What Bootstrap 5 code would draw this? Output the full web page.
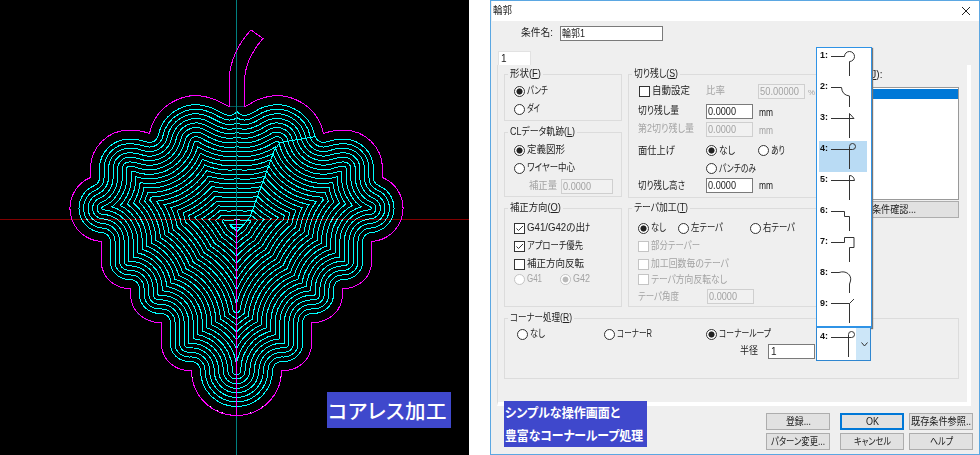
<!DOCTYPE html>
<html lang="ja">
<head>
<meta charset="utf-8">
<meta name="viewport" content="width=device-width, initial-scale=1">
<title>輪郭</title>
<link href="https://cdn.jsdelivr.net/npm/bootstrap@5.3.0/dist/css/bootstrap.min.css" rel="stylesheet">
<style>
body{width:980px;height:455px;overflow:hidden;background:#fff;color:#222;font:10px/14px "Liberation Sans","Noto Sans CJK JP",sans-serif;font-feature-settings:"palt"}
.cad{width:469px;height:455px;background:#000;margin-right:21px}
.cad svg{display:block}
.axis{mix-blend-mode:lighten}
.caption-tag{position:absolute;background:#3f48cc;color:#fff;font-family:"Noto Sans CJK JP",sans-serif;white-space:nowrap}
.tag-a{left:327px;top:392px;width:124px;height:36px;font-size:20.5px;font-weight:500;line-height:37px;padding-left:1px}
.tag-b{left:13px;top:400px;width:143px;height:46px;font-size:13px;font-weight:700;line-height:22.5px;padding-left:1px}
.dlg{width:490px;height:455px;background:#efefef;border:1px solid #5ba7e2;font-size:10px;padding-left:1px}
.titlebar{height:20px;padding:0 8px 0 1px}
.namebar{height:30px;padding:5px 0 0 29px}
.t{display:inline-block;white-space:nowrap;line-height:14px;flex:none}
.caption-tag .t{line-height:inherit}
.fld{flex:none;background:#fff;border:1px solid #7a7a7a;height:15px;line-height:13px;padding-left:1px;white-space:nowrap}
.off{color:#a3a3a3}
.fld.off{background:#f1f1f1;border-color:#cfcfcf}
.tabhead{width:33px;height:14px;margin-left:6px;background:#fff;border:1px solid #e2e2e2;border-bottom:0;line-height:14px;padding-left:2px}
.pane{margin-left:5px;width:474px;height:341px;border-left:1px solid #dcdcdc;border-right:4px solid #fff;border-bottom:4px solid #fff;padding:9px 0 0 6px}
.grp{display:grid;border:1px solid #dcdcdc}
.grp>.lg{margin-top:-8px;height:14px;justify-self:start;background:#efefef;padding:0 2px;margin-left:3px}
.rw{display:flex;align-items:center;min-height:0}
.g1{height:47px;grid-template-rows:7px 18px 18px}
.g2{height:65px;grid-template-rows:8px 18px 18px 18px}
.g3{height:99px;grid-template-rows:10px 18px 18px 18px 12px}
.g4{height:124px;grid-template-rows:7px 18px 22px 14px 29px 7px 27px}
.g5{height:99px;grid-template-rows:10px 18px 18px 18px 13px 21px}
.g6{height:61px;width:455px;grid-template-rows:6px 18px 16px}
.col-a{width:118px}.col-b{width:236px;margin-left:6px}.col-c{width:91px;margin-left:4px}
.rd,.ck{flex:none;width:11px;height:11px;border:1px solid #333;background:#fff;margin-right:2px}
.rd{border-radius:50%}
.rd.on{background:radial-gradient(circle,#222 0 2.7px,#fff 3.4px)}
.rd.off,.ck.off{border-color:#c4c4c4}
.rd.on.off{background:radial-gradient(circle,#b9b9b9 0 2.6px,#fff 3.3px)}
.ck svg{display:block}
.in9{padding-left:9px}
.in10{padding-left:10px}
.lst{height:113px;background:#fff;border:1px solid #999;border-left:0;padding-top:1px}
.sel{height:10px;background:#0078d7}
.wbtn{display:flex;align-items:center;justify-content:center;background:#e1e1e1;border:1px solid #adadad;height:17px;white-space:nowrap}
.btns{display:grid;grid-template-columns:68px 63px 63px;gap:3px 6px;margin:7px 0 0 274px;width:max-content}
.btns .wbtn{width:64px}
.wbtn.ok{border:2px solid #0078d7}
.drop{position:absolute;left:816px;top:47px;width:56px;height:281px;background:#fff;border:1px solid #2f93e6;border-bottom-width:2px;box-shadow:1px 1px 1px #777}
.combo{position:absolute;left:816px;top:328px;width:55px;height:33px;background:#fff;border:1px solid #2f86d0;border-top:0}
.drop svg,.combo svg{display:block}
</style>
</head>
<body class="position-relative d-flex">

<section class="cad flex-shrink-0">
<svg width="469" height="455" viewBox="0 0 469 455" fill="none" shape-rendering="crispEdges">
  <defs>
    <path id="leaf" d="M229.5,106.5 C224,105 220,101 212,98.500 A47.600 47.600 0 0 0 149.500,133.500 C144,131.500 137,130 129,130.200 A38.500 38.500 0 0 0 90.500,168 L90.500,177.500 A33.300 33.300 0 0 0 101.500,241.500 L101.500,262 A28 26.500 0 0 0 130.500,288.500 L130.500,295 C131,310 143,323 161.500,322.500 L161.500,344 A28 26.500 0 0 0 191.500,370.500 A44.800 44.800 0 1 0 281.500,370.500 A28 26.500 0 0 0 311.500,344 L311.500,322.500 C330,323 342,310 342.500,295 L342.500,288.500 A28 26.500 0 0 0 371.500,262 L371.500,241.500 A33.300 33.300 0 0 0 382.500,177.500 L382.500,168 A38.500 38.500 0 0 0 344,130.200 C336,130 329,131.500 323.500,133.500 A47.600 47.600 0 0 0 261,98.500 C253,101 250,105 244.500,106.500"/>
    <clipPath id="inside"><use href="#leaf"/></clipPath>
  </defs>
  <g id="offsets" clip-path="url(#inside)" stroke-linejoin="round" stroke-linecap="round"></g>
  <path class="axis" d="M0,219.500H469" stroke="#800000"/>
  <path d="M236.500,0V455" stroke="#008080"/>
  <path d="M316,136.500L280,142.500L274,151L250,217L244,224.500L237,231.500L230,224.500H245M233,227.500H241" stroke="#0ff"/>
  <use href="#leaf" stroke="#f0f"/>
  <path d="M229.500,106.500V93.500L229,93V80C230,61 238,44 251,30L263,38.500C252,51 244.500,66 244.500,81V106.500M236.500,219V415" stroke="#f0f"/>
  <path d="M192,377.500h1M280,377.500h1M210,406.500h1M262,406.500h1M217,410.500h1M222,412.500h1M250,412.500h1" stroke="#fff"/>
</svg>
</section>
<div class="caption-tag tag-a"><span class="t" data-w="119">コアレス加工</span></div>

<main class="dlg flex-shrink-0 position-relative">
  <header class="titlebar bg-white d-flex align-items-center justify-content-between">
    <span class="t" data-w="19">輪郭</span>
    <svg width="10" height="10" viewBox="0 0 10 10" stroke="#222" fill="none"><path d="M1,1L9,9M9,1L1,9"/></svg>
  </header>
  <div class="namebar d-flex">
    <span class="t" data-w="32" style="margin-right:7px">条件名:</span><div class="fld" style="width:103px"><span class="t" data-w="23">輪郭1</span></div>
  </div>
  <div class="tabhead">1</div>
  <div class="pane">
    <div class="d-flex">
      <div class="col-a d-grid" style="row-gap:11px">
        <div class="grp g1">
          <div class="lg"><span class="t" data-w="31">形状(<u>F</u>)</span></div>
          <div class="rw in9"><i class="rd on"></i><span class="t" data-w="21">パンチ</span></div>
          <div class="rw in9"><i class="rd"></i><span class="t" data-w="13">ダイ</span></div>
        </div>
        <div class="grp g2">
          <div class="lg"><span class="t" data-w="65">CLデータ軌跡(<u>L</u>)</span></div>
          <div class="rw in9"><i class="rd on"></i><span class="t" data-w="38">定義図形</span></div>
          <div class="rw in9"><i class="rd"></i><span class="t" data-w="48">ワイヤー中心</span></div>
          <div class="rw off justify-content-end pe-2"><span class="t me-1" data-w="28">補正量</span><div class="fld off" style="width:52px"><span class="t" data-w="28">0.0000</span></div></div>
        </div>
        <div class="grp g3">
          <div class="lg"><span class="t" data-w="51">補正方向(<u>O</u>)</span></div>
          <div class="rw in9"><i class="ck"><svg width="9" height="9" fill="none" stroke="#333"><path d="M1.500,4.500L3.500,6.500L8,2"/></svg></i><span class="t" data-w="63">G41/G42の出ﾅ</span></div>
          <div class="rw in9"><i class="ck"><svg width="9" height="9" fill="none" stroke="#333"><path d="M1.500,4.500L3.500,6.500L8,2"/></svg></i><span class="t" data-w="56">アプローチ優先</span></div>
          <div class="rw in9"><i class="ck"></i><span class="t" data-w="57">補正方向反転</span></div>
          <div class="rw in9 off"><i class="rd off"></i><span class="t" data-w="15">G41</span><i class="rd on off" style="margin-left:18px"></i><span class="t" data-w="17">G42</span></div>
        </div>
      </div>
      <div class="col-b d-grid" style="row-gap:10px">
        <div class="grp g4">
          <div class="lg"><span class="t" data-w="44">切り残し(<u>S</u>)</span></div>
          <div class="rw in10"><i class="ck"></i><span class="t" data-w="38">自動設定</span><span class="t off" data-w="19" style="margin-left:16px">比率</span><div class="fld off" style="width:47px;margin-left:33px"><span class="t" data-w="39">50.00000</span></div><span class="t off" style="margin-left:3px;font-size:8px;padding-top:4px">%</span></div>
          <div class="rw in9"><span class="t" data-w="41">切り残し量</span><div class="fld" style="width:47px;margin-left:27px"><span class="t" data-w="28">0.0000</span></div><span class="t pt-1" data-w="14" style="margin-left:6px">mm</span></div>
          <div class="rw in9 off"><span class="t" data-w="56">第2切り残し量</span><div class="fld off" style="width:47px;margin-left:12px"><span class="t" data-w="28">0.0000</span></div><span class="t pt-1" data-w="14" style="margin-left:6px">mm</span></div>
          <div class="rw in9"><span class="t" data-w="37">面仕上げ</span><i class="rd on" style="margin-left:31px"></i><span class="t" data-w="16">なし</span><i class="rd" style="margin-left:23px"></i><span class="t" data-w="14">あり</span></div>
          <div class="rw" style="padding-left:77px"><i class="rd"></i><span class="t" data-w="37">パンチのみ</span></div>
          <div class="rw in9"><span class="t" data-w="47">切り残し高さ</span><div class="fld" style="width:47px;margin-left:21px"><span class="t" data-w="28">0.0000</span></div><span class="t" data-w="14" style="margin-left:6px">mm</span></div>
        </div>
        <div class="grp g5">
          <div class="lg"><span class="t" data-w="54">テーパ加工(<u>T</u>)</span></div>
          <div class="rw in9"><i class="rd on"></i><span class="t" data-w="15">なし</span><i class="rd" style="margin-left:12px"></i><span class="t" data-w="32">左テーパ</span><i class="rd" style="margin-left:27px"></i><span class="t" data-w="32">右テーパ</span></div>
          <div class="rw in9 off"><i class="ck off"></i><span class="t" data-w="49">部分テーパー</span></div>
          <div class="rw in9 off"><i class="ck off"></i><span class="t" data-w="78">加工回数毎のテーパ</span></div>
          <div class="rw in9 off"><i class="ck off"></i><span class="t" data-w="76">テーパ方向反転なし</span></div>
          <div class="rw in9 off"><span class="t" data-w="41">テーパ角度</span><div class="fld off" style="width:47px;margin-left:28px"><span class="t" data-w="28">0.0000</span></div></div>
        </div>
      </div>
      <div class="col-c">
        <div style="height:13px;margin-top:-6px;padding-left:0"><span class="t">(<u>J</u>):</span></div>
        <div class="lst" style="margin-top:6px"><div class="sel"></div></div>
        <div class="wbtn justify-content-start" style="margin-top:1px;padding-left:3px"><span class="t" data-w="44">条件確認...</span></div>
      </div>
    </div>
    <div class="grp g6" style="margin-top:11px">
      <div class="lg"><span class="t" data-w="62">コーナー処理(<u>R</u>)</span></div>
      <div class="rw" style="padding-left:12px"><i class="rd"></i><span class="t" data-w="15">なし</span><i class="rd" style="margin-left:59px"></i><span class="t" data-w="35">コーナーR</span><i class="rd on" style="margin-left:54px"></i><span class="t" data-w="52">コーナーループ</span></div>
      <div class="rw" style="padding-left:235px"><span class="t" data-w="18">半径</span><div class="fld" style="width:47px;margin-left:10px;padding-left:2px">1</div></div>
    </div>
  </div>
  <div class="btns">
    <div class="wbtn"><span class="t" data-w="25">登録...</span></div>
    <div class="wbtn ok"><span class="t" data-w="13">OK</span></div>
    <div class="wbtn"><span class="t" data-w="60">既存条件参照..</span></div>
    <div class="wbtn"><span class="t" data-w="54">パターン変更...</span></div>
    <div class="wbtn"><span class="t" data-w="37">キャンセル</span></div>
    <div class="wbtn"><span class="t" data-w="23">ヘルプ</span></div>
  </div>
  <div class="caption-tag tag-b"><span class="t" data-w="115">シンプルな操作画面と</span><br><span class="t" data-w="138">豊富なコーナーループ処理</span></div>
</main>

<div class="drop">
<svg width="54" height="278" viewBox="817 48 54 278" fill="none" stroke="#333">
  <rect x="819" y="141" width="48" height="31" fill="#b9dbf4" stroke="none"/>
  <g fill="#111" stroke="none" font-family="Liberation Sans" font-size="9" font-weight="700">
    <text x="820" y="58">1:</text><text x="820" y="89">2:</text><text x="820" y="120">3:</text><text x="820" y="151">4:</text><text x="820" y="182">5:</text><text x="820" y="213">6:</text><text x="820" y="244">7:</text><text x="820" y="275">8:</text><text x="820" y="306">9:</text>
  </g>
  <path d="M831,56.500H844.500A5,5 0 1 1 849.500,61.500V76"/>
  <path d="M831,87.500H841.500Q842,95 849.500,96V107"/>
  <path d="M831,118.500H854L849.500,113.500V138"/>
  <path d="M831,149.500H849.500V169M849.500,149.500V146.500A3,3 0 1 1 852.500,149.500H849"/>
  <path d="M831,180.500H854.500C854,177 852,175.500 849.500,175.500V200"/>
  <path d="M831,211.500H844.500V216.500H849.500V231"/>
  <path d="M831,242.500H844.500V237.500H854V247.500H849.500V262"/>
  <path d="M831,272.500H839C846,270 852,275 850.500,281L849.500,284V293"/>
  <path d="M831,303.500H849.500V323M849.500,303.500L854,299"/>
</svg></div>
<div class="combo">
<svg width="53" height="32" viewBox="817 328 53 32" fill="none" stroke="#333">
  <rect x="856" y="328" width="14" height="32" fill="#cce6f8" stroke="none"/>
  <text x="820" y="339" fill="#111" stroke="none" font-family="Liberation Sans" font-size="9" font-weight="700">4:</text>
  <path d="M831,337.500H848.500V357M848.500,337.500V334.500A3,3 0 1 1 851.500,337.500H848M861.500,342.500L864.500,346L867.500,342.500"/>
</svg></div>

<script src="https://cdn.jsdelivr.net/npm/bootstrap@5.3.0/dist/js/bootstrap.bundle.min.js"></script>
<script>
// Tool passes: nested strokes of the contour, widest first, leave one thin ring per pass
const g = document.getElementById('offsets');
for (let i = 24; i >= 0; i--) {
  const d = 9 + i * 4.55;
  for (const [w, c] of [[2 * d + 1, '#0ff'], [2 * d - 1, '#000']]) {
    const u = document.createElementNS('http://www.w3.org/2000/svg', 'use');
    u.setAttribute('href', '#leaf');
    u.setAttribute('stroke', c);
    u.setAttribute('stroke-width', w);
    g.appendChild(u);
  }
}
// Labels keep their nominal width: condensed when too long, tracked when too short
for (const e of document.querySelectorAll('[data-w]')) {
  const n = e.textContent.length, w = +e.dataset.w, nat = e.getBoundingClientRect().width;
  if (nat > w) {
    e.style.width = w + 'px';
    e.style.transformOrigin = '0 50%';
    e.style.transform = 'scaleX(' + (w / nat).toFixed(4) + ')';
  } else {
    e.style.letterSpacing = ((w - nat) / n).toFixed(3) + 'px';
  }
}
</script>
</body>
</html>
